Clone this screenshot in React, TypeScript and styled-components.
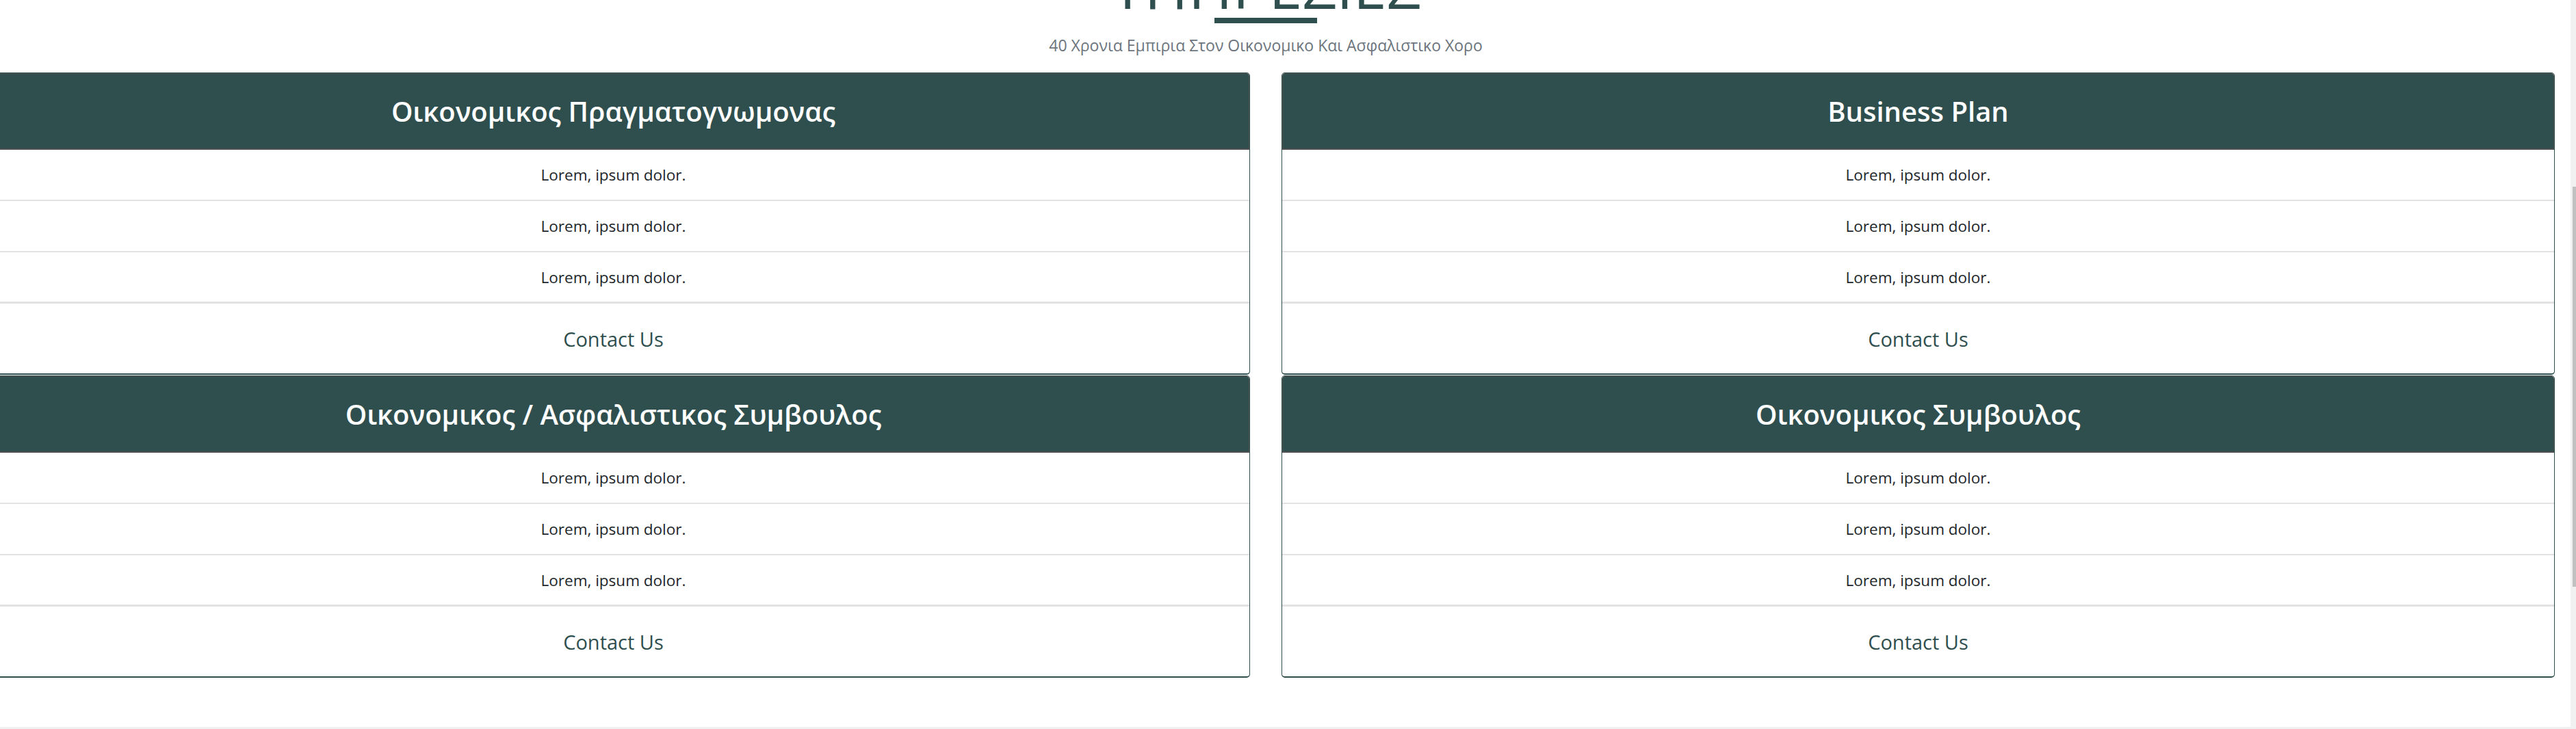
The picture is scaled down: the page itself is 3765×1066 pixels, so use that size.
import React from "react";
import styled, { createGlobalStyle } from "styled-components";

const GlobalStyle = createGlobalStyle`
  html, body {
    margin: 0;
    padding: 0;
    background: #ffffff;
    font-family: "Open Sans", "Noto Sans", "DejaVu Sans", sans-serif;
  }
  * { box-sizing: border-box; }
`;

const Page = styled.div`
  width: 3765px;
  height: 1066px;
  display: flex;
  flex-direction: column;
  overflow: hidden;
  background: #ffffff;
`;

const Viewport = styled.div`
  flex: 1;
  min-height: 0;
  display: flex;
`;

const Main = styled.main`
  flex: 1;
  min-width: 0;
  overflow: hidden;
`;

const ScrollTrack = styled.div`
  width: 8px;
  background: #f1f1f1;
  display: flex;
  flex-direction: column;
  align-items: flex-end;
`;

const ScrollThumb = styled.div`
  width: 5px;
  height: 585px;
  margin-top: 273px;
  background: #c1c1c1;
`;

const BottomTrack = styled.div`
  height: 3px;
  background: #f0f0f0;
`;

const Section = styled.section`
  width: 3768px;
  margin-left: -34px;
  display: flex;
  flex-direction: column;
  align-items: center;
`;

const Title = styled.h2`
  margin: -65px 0 0;
  font-size: 88px;
  line-height: 88px;
  font-weight: 400;
  color: #2f4f4f;
  letter-spacing: 0;
`;

const Underline = styled.div`
  width: 150px;
  height: 8px;
  margin-top: 3px;
  background: #2f4f4f;
`;

const Subtitle = styled.p`
  margin: 16px 0 0;
  font-size: 23px;
  line-height: 32px;
  color: #6c757d;
`;

const Grid = styled.div`
  width: 100%;
  margin-top: 24px;
  display: grid;
  grid-template-columns: 1861px 1861px;
  column-gap: 46px;
  row-gap: 1px;
`;

const Card = styled.article`
  display: flex;
  flex-direction: column;
  border: 1px solid #2f4f4f;
  border-bottom-width: 2px;
  border-radius: 5px;
  background: #ffffff;
  overflow: hidden;
`;

const CardHeader = styled.header`
  height: 112px;
  display: flex;
  align-items: center;
  justify-content: center;
  background: #2f4f4f;
  border: 1px solid #505050;
  border-bottom-width: 2px;
  border-radius: 4px 4px 0 0;
`;

const CardTitle = styled.h3`
  margin: 0;
  color: #ffffff;
  font-size: 40px;
  font-weight: 600;
  line-height: 1.2;
`;

const ItemList = styled.ul`
  list-style: none;
  margin: 0;
  padding: 0;
`;

const Item = styled.li<{ $last?: boolean }>`
  height: 75px;
  display: flex;
  align-items: center;
  justify-content: center;
  border-bottom: ${(p) => (p.$last ? "3px" : "2px")} solid #e2e2e2;
  font-size: 22.5px;
  color: #212529;
`;

const Footer = styled.footer`
  height: 102px;
  display: flex;
  align-items: center;
  justify-content: center;
`;

const ContactLink = styled.a`
  font-size: 29px;
  color: #2f4f4f;
  text-decoration: none;
`;

const services = [
  "Οικονομικος Πραγματογνωμονας",
  "Business Plan",
  "Οικονομικος / Ασφαλιστικος Συμβουλος",
  "Οικονομικος Συμβουλος",
];

const items = ["Lorem, ipsum dolor.", "Lorem, ipsum dolor.", "Lorem, ipsum dolor."];

export default function App() {
  return (
    <>
      <GlobalStyle />
      <Page>
        <Viewport>
          <Main>
            <Section>
              <Title>ΥΠΗΡΕΣΙΕΣ</Title>
              <Underline />
              <Subtitle>40 Χρονια Εμπιρια Στον Οικονομικο Και Ασφαλιστικο Χορο</Subtitle>
              <Grid>
                {services.map((s) => (
                  <Card key={s}>
                    <CardHeader>
                      <CardTitle>{s}</CardTitle>
                    </CardHeader>
                    <ItemList>
                      {items.map((t, i) => (
                        <Item key={i} $last={i === items.length - 1}>
                          {t}
                        </Item>
                      ))}
                    </ItemList>
                    <Footer>
                      <ContactLink href="#">Contact Us</ContactLink>
                    </Footer>
                  </Card>
                ))}
              </Grid>
            </Section>
          </Main>
          <ScrollTrack>
            <ScrollThumb />
          </ScrollTrack>
        </Viewport>
        <BottomTrack />
      </Page>
    </>
  );
}
